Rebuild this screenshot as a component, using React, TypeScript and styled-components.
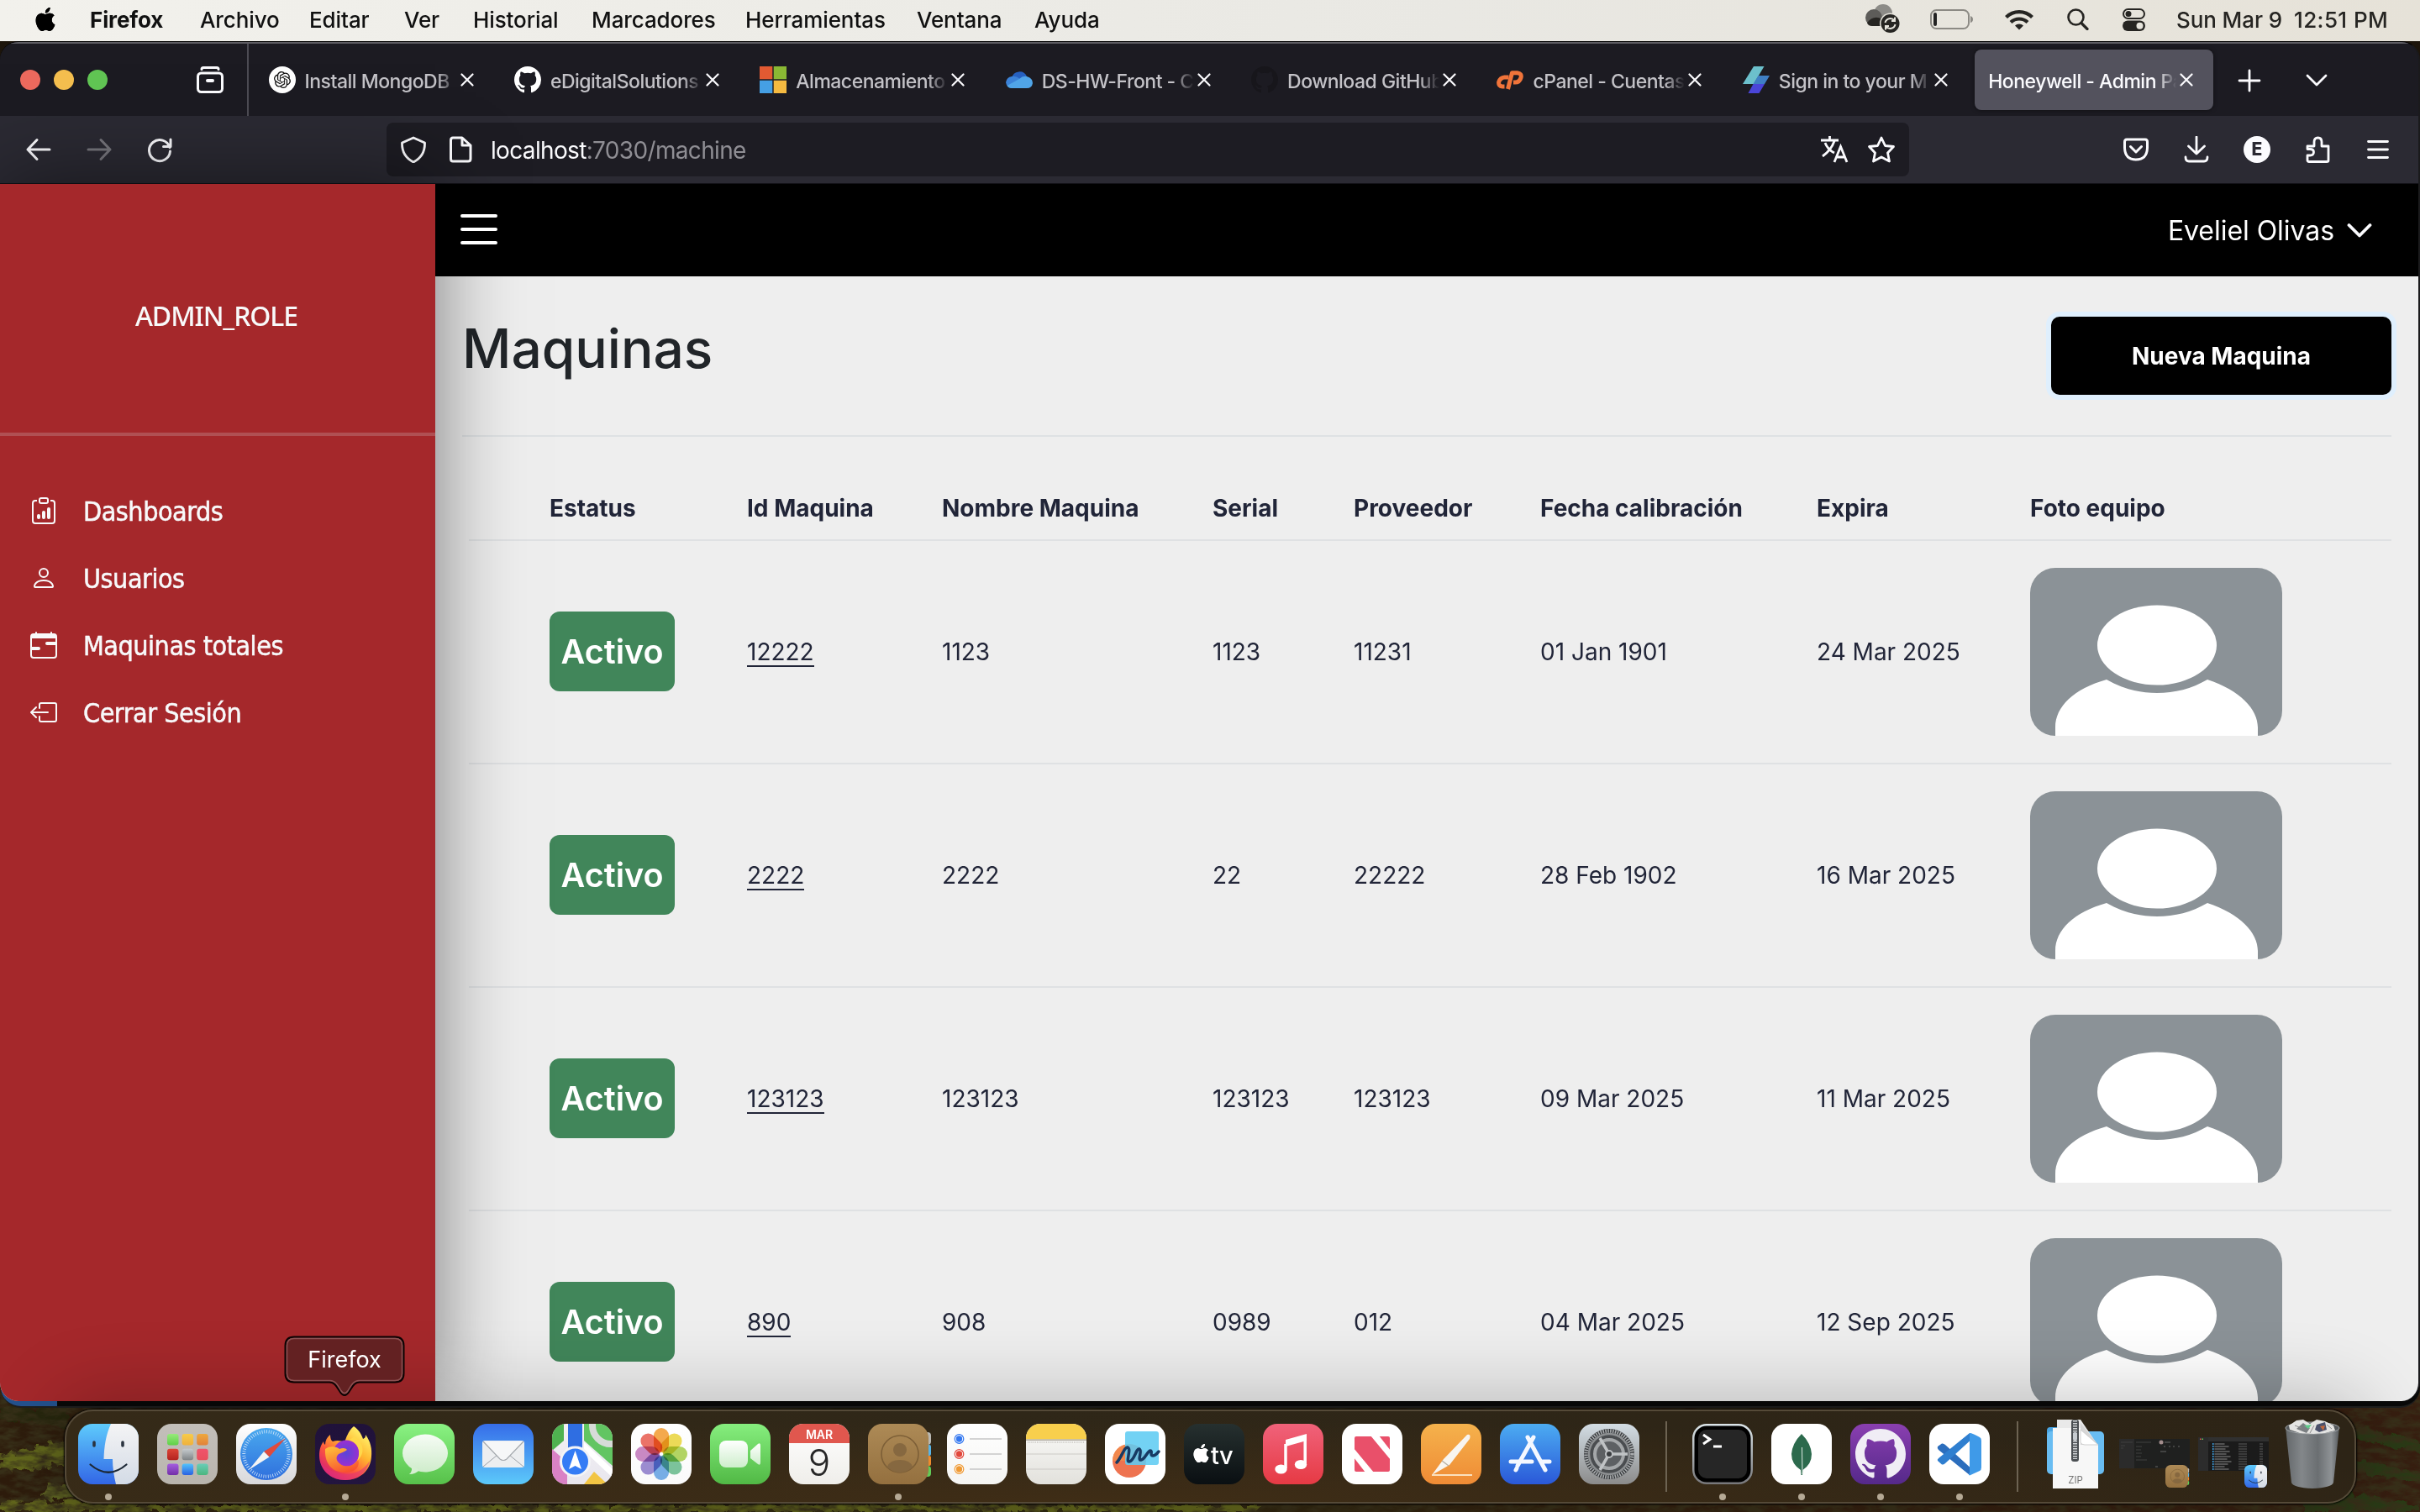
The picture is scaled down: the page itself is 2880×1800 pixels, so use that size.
import React from 'react';
import styled, { createGlobalStyle, css } from 'styled-components';
import { BsApple, BsGithub, BsClipboardData, BsPerson, BsCalendarRange, BsBoxArrowLeft, BsList } from 'react-icons/bs';
import { SiOpenai } from 'react-icons/si';

const Global = createGlobalStyle`
  * { box-sizing: border-box; }
  body { margin: 0; background: #1d150b; font-family: Inter, "Liberation Sans", sans-serif; }
  svg { display: block; flex: none; }
`;

/* ---------- desktop ---------- */

const Desktop = styled.div`
  position: relative;
  width: 2880px;
  height: 1800px;
  overflow: hidden;
  display: flex;
  flex-direction: column;
`;

const Wallpaper = styled.svg`
  position: absolute;
  left: 0;
  bottom: 0;
`;

const MenuBar = styled.header`
  position: relative;
  height: 49px;
  flex: none;
  display: flex;
  align-items: center;
  justify-content: space-between;
  padding: 0 38px 0 40px;
  background: linear-gradient(90deg, #f2f1ec, #e9e8e3 60%, #e6e2d8);
  color: #111;
  font-size: 26px;
`;

const MenuLeft = styled.nav`
  display: flex;
  align-items: center;
  white-space: nowrap;
  margin-top: -3px;
`;

const MenuItem = styled.span<{ $w: number; $bold?: boolean }>`
  width: ${p => p.$w}px;
  font-weight: ${p => (p.$bold ? 700 : 500)};
  letter-spacing: -0.1px;
`;

const AppleMark = styled.span`
  width: 67px;
  font-size: 28px;
  color: #000;
`;

const MenuRight = styled.div`
  display: flex;
  align-items: center;
  color: #262522;
  margin-top: -3px;
`;

const Status = styled.span<{ $mr: number }>`
  margin-right: ${p => p.$mr}px;
`;

const Clock = styled.span<{ $w: number; $ls?: number }>`
  width: ${p => p.$w}px;
  font-weight: 500;
  white-space: nowrap;
  letter-spacing: ${p => p.$ls ?? 0}px;
`;

/* ---------- browser window ---------- */

const BackWindow = styled.div`
  position: absolute;
  left: 1px;
  top: 1500px;
  width: 2879px;
  height: 176px;
  border-radius: 0 0 24px 24px;
  border-bottom: 2px solid #1f1f1f;
  background: linear-gradient(90deg, #24528f 67px, #090909 67px);
`;

const Window = styled.section`
  position: relative;
  width: 2880px;
  height: 1619px;
  flex: none;
  display: flex;
  flex-direction: column;
  overflow: hidden;
  border-radius: 22px;
  border-top: 1px solid #000;
  border-right: 2px solid #1a1a1c;
  background: #1c1b22;
`;

const TabStrip = styled.div`
  height: 88px;
  flex: none;
  display: flex;
  align-items: center;
  border-top: 2px solid #5e5d63;
  background: #1c1b22;
`;

const Lights = styled.div`
  display: flex;
  gap: 16px;
  padding-left: 24px;
  width: 234px;
`;

const Light = styled.i<{ $c: string }>`
  width: 24px;
  height: 24px;
  border-radius: 50%;
  background: ${p => p.$c};
`;

const StripDivider = styled.i`
  width: 1.5px;
  align-self: stretch;
  margin: 0 8px 0 28px;
  background: #4d4c54;
`;

const Tab = styled.div<{ $active?: boolean }>`
  width: 284px;
  height: 72px;
  margin-right: 8.4px;
  padding: 0 16px;
  flex: none;
  display: flex;
  align-items: center;
  border-radius: 8px;
  color: ${p => (p.$active ? '#fbfbfe' : '#c3c2c7')};
  ${p => p.$active && css`
    background: #53525d;
    box-shadow: 0 0 5px rgba(0, 0, 0, 0.5);
  `}
`;

const TabIcon = styled.span<{ $c?: string }>`
  width: 32px;
  height: 32px;
  margin-right: 11px;
  flex: none;
  display: flex;
  align-items: center;
  justify-content: center;
  font-size: 32px;
  color: ${p => p.$c ?? '#fff'};
`;

const TabTitle = styled.span<{ $active?: boolean }>`
  flex: 1;
  min-width: 0;
  white-space: nowrap;
  font-size: 23px;
  font-weight: 450;
  line-height: 32px;
  padding-top: 3px;
  letter-spacing: -0.5px;
  mask-image: linear-gradient(90deg, #000 calc(100% - 24px), transparent 100%);
`;

const TabClose = styled.span`
  width: 16px;
  margin: 0 8px 0 4px;
`;

const Toolbar = styled.div`
  height: 81px;
  flex: none;
  display: flex;
  align-items: center;
  background: #2b2a33;
  border-bottom: 1px solid #131218;
`;

const NavButtons = styled.div`
  width: 460px;
  padding-left: 30px;
  display: flex;
  gap: 40px;
`;

const UrlBar = styled.div`
  width: 1812px;
  height: 64px;
  border-radius: 8px;
  background: #1d1c23;
  display: flex;
  align-items: center;
  padding: 0 16px;
`;

const Url = styled.span`
  flex: 1;
  margin-left: 20px;
  padding-top: 2px;
  font-size: 28px;
  letter-spacing: -0.66px;
  color: #8f8e94;
  b { font-weight: 400; color: #fbfbfe; }
`;

const ToolIcons = styled.div`
  margin-left: 254px;
  display: flex;
  gap: 40px;
`;

const Account = styled.span`
  width: 32px;
  height: 32px;
  border-radius: 50%;
  background: #fbfbfe;
  color: #2b2a33;
  font-weight: 800;
  font-size: 21px;
  line-height: 32px;
  text-align: center;
`;

/* ---------- admin page ---------- */

const Page = styled.div`
  flex: 1;
  min-height: 0;
  display: flex;
  background: #eee;
`;

const Sidebar = styled.aside`
  position: relative;
  width: 518px;
  flex: none;
  background: #a5282b;
  box-shadow: 0 0 96px rgba(0, 0, 0, 0.5);
  color: #f8f9fa;
  font-size: 32px;
`;

const Role = styled.div`
  height: 300px;
  border-bottom: 4px solid #b05053;
  padding: 17px 3px 0 0;
  display: flex;
  align-items: center;
  justify-content: center;
  font-family: "Noto Sans", sans-serif;
  font-weight: 500;
  letter-spacing: -1.1px;
`;

const SideNav = styled.nav`
  padding-top: 49px;
`;

const SideLink = styled.a`
  height: 80px;
  padding-left: 36px;
  display: flex;
  align-items: center;
  gap: 31px;
`;

const SideLabel = styled.span`
  padding-top: 2px;
  font-family: "DejaVu Sans Condensed", "DejaVu Sans", sans-serif;
  font-stretch: condensed;
  letter-spacing: -0.48px;
  -webkit-text-stroke: 0.5px #f8f9fa;
`;

const Main = styled.main`
  flex: 1;
  min-width: 0;
  display: flex;
  flex-direction: column;
`;

const Navbar = styled.div`
  position: relative;
  z-index: 1;
  height: 110px;
  flex: none;
  display: flex;
  align-items: center;
  justify-content: space-between;
  padding: 0 55px 2px 20px;
  background: #000;
  color: #fff;
  font-size: 64px;
`;

const User = styled.div`
  display: flex;
  align-items: center;
  gap: 15px;
  padding-top: 2px;
  font-size: 32px;
  letter-spacing: -0.05px;
`;

const Content = styled.div`
  padding: 0 32px;
`;

const TitleRow = styled.div`
  height: 191px;
  padding-bottom: 1px;
  border-bottom: 2px solid #dee1e4;
  display: flex;
  align-items: center;
  justify-content: space-between;
`;

const Title = styled.h1`
  margin: 0;
  padding-bottom: 17px;
  font-size: 64px;
  font-weight: 500;
  color: #212529;
`;

const NewButton = styled.button`
  width: 405px;
  height: 93px;
  padding: 2px 0 0;
  border: 0;
  border-radius: 10px;
  background: #000;
  box-shadow: 0 0 0 6px #dfeffd;
  color: #fff;
  font: 700 28px Inter, sans-serif;
`;

const Table = styled.div`
  margin-left: 8px;
  color: #212538;
  font-size: 28px;
`;

const Row = styled.div<{ $head?: boolean }>`
  height: ${p => (p.$head ? 124 : 266)}px;
  padding: ${p => (p.$head ? '48px 0 0 96px' : '0 0 0 96px')};
  border-bottom: 2px solid #dfe1e3;
  display: grid;
  grid-template-columns: 235px 232px 322px 168px 222px 329px 254px 1fr;
  align-items: center;
  font-weight: ${p => (p.$head ? 700 : 400)};
  white-space: nowrap;
`;

const Badge = styled.span`
  width: 149px;
  height: 95px;
  margin-top: -1px;
  border-radius: 12px;
  background: #41865a;
  color: #fff;
  font-size: 39.5px;
  font-weight: 600;
  display: flex;
  align-items: center;
  justify-content: center;
`;

const IdLink = styled.a`
  justify-self: start;
  border-bottom: 2px solid #212538;
  line-height: 32px;
  margin-top: 2px;
`;

/* ---------- dock ---------- */

const Dock = styled.footer`
  position: absolute;
  left: 77px;
  top: 1678px;
  width: 2727px;
  height: 112px;
  padding-left: 3px;
  display: flex;
  border: 2px solid #554a38;
  border-radius: 34px;
  background: radial-gradient(ellipse 60% 90% at 45% 100%, #3f2d16, transparent), linear-gradient(90deg, #352a18, #2f2718 40%, #2d2416);
  box-shadow: 0 -4px 90px 10px rgba(0, 0, 0, 0.24), 0 0 2px 1px #000;
`;

const Slot = styled.div`
  width: 94px;
  flex: none;
  padding-top: 15px;
  display: flex;
  flex-direction: column;
  align-items: center;
`;

const Dot = styled.i`
  width: 8px;
  height: 8px;
  margin-top: 11px;
  border-radius: 50%;
  background: #b5a995;
`;

const DockSep = styled.i<{ $w: number }>`
  width: ${p => p.$w}px;
  flex: none;
  padding: 12px ${p => (p.$w - 2) / 2}px;
  &::before { content: ''; display: block; width: 2px; height: 84px; background: #6d6352; }
`;

const Tooltip = styled.div`
  position: absolute;
  left: 338px;
  top: 1590px;
  width: 144px;
  height: 74px;
  font-size: 27px;
  line-height: 57px;
  color: #fff;
  text-align: center;
  svg { position: absolute; inset: 0; }
  span { position: relative; }
`;

/* ---------- small drawings ---------- */

const Stroke = ({ d, size = 32, w = 3, box = 32, color = '#fbfbfe' }: { d: string; size?: number; w?: number; box?: number; color?: string }) => (
  <svg width={size} height={size} viewBox={`0 0 ${box} ${box}`} fill="none" stroke={color} strokeWidth={w} strokeLinecap="round" strokeLinejoin="round">
    <path d={d} />
  </svg>
);

const CloseMark = () => <Stroke size={16} box={16} w={2.2} d="M1.5 1.5L14.5 14.5M14.5 1.5L1.5 14.5" />;

const Photo = () => (
  <svg width="300" height="200" viewBox="0 0 300 200">
    <rect width="300" height="200" rx="30" fill="#8b9297" />
    <path d="M30 200V190C30 165 52 144 91 133C110 144 130 149 151 149C172 149 192 144 211 133C250 146 271 168 271 190V200Z" fill="#fff" />
    <ellipse cx="151" cy="92" rx="71" ry="47.5" fill="#fff" />
  </svg>
);

const Grad = ({ id, a, b }: { id: string; a: string; b: string }) => (
  <linearGradient id={id} x1="0" y1="0" x2="0" y2="1">
    <stop offset="0" stopColor={a} />
    <stop offset="1" stopColor={b} />
  </linearGradient>
);

const Tile = ({ id, a, b, size = 72, children }: { id: string; a: string; b: string; size?: number; children?: React.ReactNode }) => (
  <svg width={size} height={size} viewBox="0 0 72 72" overflow="visible">
    <defs>
      <Grad id={id} a={a} b={b} />
      <clipPath id={`${id}c`}><rect width="72" height="72" rx="17" /></clipPath>
    </defs>
    <rect width="72" height="72" rx="17" fill={`url(#${id})`} />
    <g clipPath={`url(#${id}c)`}>{children}</g>
  </svg>
);

const Finder = ({ id = 'fin', size }: { id?: string; size?: number }) => (
  <Tile id={id} a="#5ecbfc" b="#3266e6" size={size}>
    <defs><Grad id={`${id}w`} a="#f4f4f5" b="#d3dbe6" /></defs>
    <path d="M39 0C33 13 31 27 30.500 42H41C41 52 42.500 62 45 72H72V0Z" fill={`url(#${id}w)`} />
    <path d="M19 22V26M53 22V26" stroke="#2b3440" strokeWidth="3.600" strokeLinecap="round" />
    <path d="M14.500 48.500Q36 67 57.500 48.500" fill="none" stroke="#1c2836" strokeWidth="2.200" strokeLinecap="round" />
  </Tile>
);

const launchColors: [string, string][] = [
  ['#97ea7b', '#5fd048'], ['#f6cb4a', '#f0b13c'], ['#eea83c', '#e2823a'], ['#dd4537', '#b3231f'], ['#c6cbce', '#7f8487'],
  ['#f0546c', '#e8505d'], ['#a55ee0', '#7330a8'], ['#53c4fa', '#2a62e2'], ['#69cdb8', '#4cb67f'],
];

const Launchpad = () => (
  <Tile id="lau" a="#c3bfba" b="#b9b5ae">
    <defs>{launchColors.map(([a, b], i) => <Grad key={a} id={`lp${i}`} a={a} b={b} />)}</defs>
    {launchColors.map((c, i) => <rect key={c[0]} x={12 + (i % 3) * 17.6} y={12 + Math.floor(i / 3) * 17.7} width="13.500" height="13.500" rx="3" fill={`url(#lp${i})`} />)}
  </Tile>
);

const Safari = () => (
  <Tile id="saf" a="#ffffff" b="#d8d8da">
    <defs><Grad id="safb" a="#49a9ee" b="#2f6fdd" /></defs>
    <circle cx="36" cy="36" r="31" fill="url(#safb)" />
    <circle cx="36" cy="36" r="26.700" fill="none" stroke="#d6e8fa" strokeWidth="4" strokeDasharray=".8 1.980" />
    <path d="M59 17L39.500 39.500L33 33Z" fill="#e04a3c" />
    <path d="M15 55L33 33L39.500 39.500Z" fill="#f4f4f4" />
  </Tile>
);

const Firefox = () => (
  <Tile id="ffx" a="#20123a" b="#23153f">
    <defs>
      <linearGradient id="ffa" x1=".85" y1=".1" x2=".2" y2=".95">
        <stop offset="0" stopColor="#fff36b" /><stop offset=".35" stopColor="#ffb52f" /><stop offset=".65" stopColor="#ff5a3c" /><stop offset="1" stopColor="#d61c74" />
      </linearGradient>
      <linearGradient id="ffb" x1=".2" y1="0" x2=".6" y2="1">
        <stop offset="0" stopColor="#ffbd3a" /><stop offset="1" stopColor="#f8512f" />
      </linearGradient>
      <radialGradient id="ffg"><stop offset="0" stopColor="#5a45d8" /><stop offset="1" stopColor="#9a2fd0" /></radialGradient>
    </defs>
    <path d="M46 3C52 7 55 12 57 18C60 17 60 15 60 13C66 21 68 30 67 39C66 56 53 67 36 67C18 67 5 54 5 38C5 30 7 25 10 21C10 23 11 24 12 25C12 20 14 16 18 13C18 17 19 20 21 21C26 19 31 20 35 22C37 17 39 9 46 3Z" fill="url(#ffa)" />
    <path d="M6 44C12 54 24 60 38 60C52 59 60 52 65 44C62 58 51 67 36 67C20 67 9 58 6 44Z" fill="#e0337a" opacity=".55" />
    <circle cx="37" cy="35" r="15.500" fill="url(#ffg)" />
    <path d="M12 30C18 26 25 27 29 30C33 28 37 29 38 31C36 33 32 34 28 36C23 40 26 47 34 50C41 52 48 49 51 42C54 50 49 57 38 58C23 59 11 50 12 30Z" fill="url(#ffb)" />
    <path d="M41 19C48 21 53 28 52 36C52 40 51 42 50 44C60 36 58 22 47 15Z" fill="#ffd84a" />
  </Tile>
);

const Messages = () => (
  <Tile id="msg" a="#8af283" b="#57c14a">
    <defs><Grad id="msgb" a="#f6fcf5" b="#cfeccb" /></defs>
    <ellipse cx="37" cy="35" rx="27" ry="22.500" fill="url(#msgb)" />
    <path d="M20 49Q23 56 18 60Q26 60 30 55Z" fill="#d6efd2" />
  </Tile>
);

const Mail = () => (
  <Tile id="mai" a="#366de9" b="#5cc9fa">
    <rect x="11" y="20" width="50" height="32" rx="3" fill="#eceef0" />
    <path d="M12 51L29 37M60 51L43 37" stroke="#9da2a8" strokeWidth="1" />
    <path d="M12 21L32 42Q36 45 40 42L60 21" fill="#f6f7f8" stroke="#a5a9ae" strokeWidth="1.200" />
  </Tile>
);

const Maps = () => (
  <Tile id="map" a="#f3f1f4" b="#e8e6ee">
    <path d="M0 0H14V20L0 32Z" fill="#4fb250" /><path d="M38 0H72V50L38 20Z" fill="#62c562" />
    <circle cx="70" cy="2" r="22" fill="none" stroke="#d7dbd8" strokeWidth="8" />
    <path d="M0 30L18 46V72H0Z" fill="#d982c5" /><path d="M38 72L50 57L66 72Z" fill="#f2c544" /><path d="M38 22L72 54V64L38 32Z" fill="#fff" />
    <path d="M19 0H36V40H19Z" fill="#2f6ee2" />
    <circle cx="27.500" cy="45" r="17" fill="#347cf5" stroke="#f3f4f6" strokeWidth="3" />
    <path d="M27.500 32L35 54L27.500 50L20 54Z" fill="#fff" />
  </Tile>
);

const petals = ['#f29a2e', '#e9d43a', '#a5cd48', '#65b98a', '#5f9fe0', '#8a78c8', '#c074b8', '#e85a4e'];

const PetalGroup = styled.g`
  mix-blend-mode: multiply;
`;

const Photos = () => (
  <Tile id="pho" a="#ffffff" b="#fafafa">
    {petals.map((c, i) => (
      <PetalGroup key={c}><rect x="27" y="5" width="18" height="29" rx="9" fill={c} opacity=".85" transform={`rotate(${i * 45} 36 36)`} /></PetalGroup>
    ))}
  </Tile>
);

const FaceTime = () => (
  <Tile id="fac" a="#86ee7e" b="#51b945">
    <defs><Grad id="facw" a="#ffffff" b="#cdeecb" /></defs>
    <rect x="11" y="20" width="34" height="32" rx="8" fill="url(#facw)" />
    <path d="M48 32L57 24Q60 22 60 26V46Q60 50 57 48L48 41Z" fill="url(#facw)" />
  </Tile>
);

const Calendar = () => (
  <Tile id="cal" a="#ffffff" b="#efeeea">
    <rect width="72" height="23" fill="#e0574e" />
    <text x="36" y="17.500" textAnchor="middle" fontFamily="Inter" fontSize="14" fontWeight="600" fill="#fff">MAR</text>
    <text x="36" y="62" textAnchor="middle" fontFamily="Inter" fontSize="44" fontWeight="300" fill="#262626">9</text>
  </Tile>
);

const Contacts = ({ id = 'con', size }: { id?: string; size?: number }) => (
  <svg width={size ?? 72} height={size ?? 72} viewBox="0 0 72 72" overflow="visible">
    <defs><Grad id={id} a="#ad8a56" b="#94703f" /></defs>
    <rect x="60" y="10" width="15" height="15" rx="4" fill="#b9b8b3" /><rect x="60" y="25" width="15" height="13" rx="2" fill="#58b4e6" />
    <rect x="60" y="38" width="15" height="12" rx="2" fill="#ef8a2c" /><rect x="60" y="50" width="15" height="13" rx="4" fill="#62cc56" />
    <rect width="72" height="72" rx="17" fill={`url(#${id})`} />
    <circle cx="38" cy="36" r="22" fill="none" stroke="#7d5f37" strokeWidth="1.600" />
    <circle cx="38" cy="31" r="8" fill="#866840" />
    <path d="M23 51Q26 43 38 43Q50 43 53 51Q47 58 38 58Q29 58 23 51Z" fill="#866840" />
  </svg>
);

const Reminders = () => (
  <Tile id="rem" a="#ffffff" b="#f5f5f3">
    {['#3478f0', '#e1483c', '#ef9a35'].map((c, i) => (
      <g key={c}>
        <circle cx="14.500" cy={18 + i * 18} r="5.300" fill="#fff" stroke={c} strokeWidth="1.200" /><circle cx="14.500" cy={18 + i * 18} r="3.700" fill={c} />
        <rect x="27" y={17.4 + i * 18} width="38" height="1.200" fill="#b9b9b9" />
      </g>
    ))}
  </Tile>
);

const Notes = () => (
  <Tile id="not" a="#fbfbf9" b="#e2e1dc">
    <rect width="72" height="18.500" fill="#f8cf4c" /><rect y="18.500" width="72" height="1.500" fill="#b0aca2" />
    <path d="M2 22H70" stroke="#c3c0ba" strokeWidth="1.500" strokeDasharray="1 1.200" /><path d="M0 36H72M0 54H72" stroke="#cbc9c5" />
  </Tile>
);

const Freeform = () => (
  <Tile id="fre" a="#ffffff" b="#ffffff">
    <circle cx="29" cy="44" r="20" fill="#ee7350" /><path d="M9 44A20 20 0 0 1 29 24V44Z" fill="#f3964b" opacity=".6" />
    <rect x="24" y="9" width="40" height="40" rx="3" fill="#60ccf3" opacity=".88" />
    <path d="M14 46C20 40 23 27 27 28C32 30 24 46 29 45C35 44 37 29 41 30C45 32 38 44 43 43C48 42 50 33 54 32C57 32 53 38 57 38C60 38 62 35 64 33" fill="none" stroke="#173a63" strokeWidth="3.500" strokeLinecap="round" />
  </Tile>
);

const TV = () => (
  <Tile id="atv" a="#26302f" b="#0a0f12">
    <svg x="9.500" y="22" width="22" height="26" viewBox="0 0 16 16"><BsApple size={16} color="#fff" /></svg>
    <text x="32" y="47.500" fontFamily="Inter" fontSize="29" fontWeight="500" fill="#fff" letterSpacing="-.5">tv</text>
  </Tile>
);

const Music = () => (
  <Tile id="mus" a="#f0627a" b="#e63a44">
    <path d="M27 52V19L52 12V20L27 27Z" fill="#fff" /><path d="M50.200 14V47" stroke="#fff" strokeWidth="3.500" />
    <path d="M27 24V53" stroke="#fff" strokeWidth="3.500" /><ellipse cx="21.500" cy="54" rx="7.200" ry="5.500" fill="#fff" /><ellipse cx="45" cy="48.500" rx="7.200" ry="5.500" fill="#fff" />
  </Tile>
);

const News = () => (
  <Tile id="new" a="#ffffff" b="#ffffff">
    <rect x="15" y="15" width="42" height="42" rx="2" fill="#e9506a" />
    <path d="M34 14H44L58 32V43Z" fill="#fff" /><path d="M14 29V40L28 58H38Z" fill="#fff" />
  </Tile>
);

const Pages = () => (
  <Tile id="pag" a="#f5b24c" b="#ef8b35">
    <path d="M55 13Q60 12 58 18L34 49L13 61L27 42Z" fill="#f8f5f0" /><path d="M25 44L33 50" stroke="#b9b1a5" strokeWidth="1.500" />
    <path d="M13 61H61" stroke="#fbe0bd" strokeWidth="2" />
  </Tile>
);

const AppStore = () => (
  <Tile id="aps" a="#4cacf2" b="#2a58d8">
    <g stroke="#f4f8ff" strokeWidth="5" strokeLinecap="round"><path d="M40 16L21 50M33 16L54 55M13 45H38M50 45H59M19 55L20 53" /></g>
  </Tile>
);

const Settings = () => (
  <Tile id="set" a="#d3dde4" b="#8b8b8b">
    <circle cx="36" cy="36" r="30" fill="#333639" /><circle cx="36" cy="36" r="27.500" fill="none" stroke="#a9acae" strokeWidth="4.500" strokeDasharray="1.600 1.300" />
    <circle cx="36" cy="36" r="24" fill="#4a4d50" stroke="#8d9092" strokeWidth="2.500" /><circle cx="36" cy="36" r="17" fill="#5d6063" stroke="#a4a7a9" strokeWidth="4" />
    <path d="M36 36L58 36M36 36L25 17M36 36L25 55" stroke="#c0c3c5" strokeWidth="3.500" /><circle cx="36" cy="36" r="4" fill="#3a3d40" stroke="#c0c3c5" strokeWidth="2" />
  </Tile>
);

const Terminal = () => (
  <Tile id="ter" a="#dce6ea" b="#77777a">
    <rect x="2.500" y="2.500" width="67" height="67" rx="14.500" fill="#000" />
    <rect x="7" y="7" width="58" height="58" rx="10" fill="#262626" />
    <path d="M13 13L21 18.500L13 24" fill="none" stroke="#fff" strokeWidth="3" /><path d="M25 27H35" stroke="#fff" strokeWidth="2.800" />
  </Tile>
);

const Mongo = () => (
  <Tile id="mon" a="#ffffff" b="#ffffff">
    <path d="M36 12Q25 23 24 36Q24 48 35 55L35.500 61H37L37.500 55Q48 48 48 36Q47 23 36 12Z" fill="#2c6a4d" />
    <path d="M36.500 28L37 60" stroke="#dfeae4" strokeWidth="1" />
  </Tile>
);

const GithubDesktop = () => (
  <Tile id="ghd" a="#8a3fb0" b="#55298a">
    <svg x="6" y="6" width="60" height="60" viewBox="0 0 16 16"><BsGithub size={16} color="#f0edf5" /></svg>
  </Tile>
);

const VSCode = () => (
  <Tile id="vsc" a="#ffffff" b="#ffffff">
    <path d="M10 27L15 23.500Q17 23 19 25L53 56L48 61L11 31Q9 29 10 27Z" fill="#2c6ebd" />
    <path d="M10 44L15 48.500Q17 49 19 47L53 16L48 11L11 41Q9 43 10 44Z" fill="#2f7fd0" />
    <path d="M48 11Q50 10.500 60 16Q62 17 62 20V52Q62 55 60 56L48 61.500Q46 61 48 58Z" fill="#3f9ae8" />
  </Tile>
);

/* Document and bin pictures rise a little above the row of app tiles. */
const Tall = styled.div<{ $mt: number }>`
  margin-top: ${p => p.$mt}px;
`;

const Zip = () => (
  <Tall $mt={-6}>
    <svg width="70" height="86" viewBox="0 0 70 86">
      <rect x="1" y="10" width="30" height="20" rx="4" fill="#4aa5e2" /><rect x="1" y="15" width="68" height="51" rx="5" fill="#69bdf2" />
      <path d="M13 1H41L62 32V80H13Z" fill="#e9e9e9" /><path d="M8 11H41L62 31V83H8Z" fill="#f7f7f7" />
      <path d="M41 5V31H62Z" fill="#d6d6d6" /><path d="M41 13V28Q42 31 46 31H62Z" fill="#fff" stroke="#cfcfcf" />
      <rect x="30" y="1" width="9" height="50" rx="3" fill="#4b4f53" /><path d="M34.500 2V48" stroke="#d2d5d8" strokeWidth="5" strokeDasharray="1.500 1.500" />
      <rect x="32" y="16" width="5" height="10" rx="2" fill="#c7ccd1" />
      <text x="35" y="77" textAnchor="middle" fontFamily="Inter" fontSize="11.500" fill="#777">ZIP</text>
    </svg>
  </Tall>
);

const MiniContacts = () => (
  <Tall $mt={16}>
    <svg width="84" height="62" viewBox="0 0 84 62" overflow="visible">
      <rect y="2" width="84" height="35" fill="#1f201f" /><rect y="2" width="18" height="35" fill="#2b2b2b" />
      <path d="M2 6H16M2 10H7M2 13H5M20 6H38M20 11H27M20 15H26M20 19H27M20 23H26M20 27H33" stroke="#414141" strokeWidth="1" />
      <circle cx="50" cy="6" r="2.500" fill="#a38d8d" /><path d="M54 6H61M53 11H55M59 11H61M64 11H66M70 11H72M49 17H56M43 35H46" stroke="#666" strokeWidth="1" />
      <svg x="55" y="33" width="28" height="28" overflow="visible"><Contacts id="con2" size={27} /></svg>
    </svg>
  </Tall>
);

const MiniFinder = () => (
  <Tall $mt={16}>
    <svg width="84" height="62" viewBox="0 0 84 62" overflow="visible">
      <rect width="84" height="40" fill="#1b1b1b" /><rect width="84" height="5" fill="#303030" /><rect width="12" height="40" fill="#2c2c2c" />
      <rect x="2" y="1.500" width="1.500" height="1.500" fill="#e55" /><rect x="4.500" y="1.500" width="1.500" height="1.500" fill="#6c5" />
      {Array.from({ length: 11 }, (_, i) => (
        <g key={i}>
          <rect x="17" y={7 + i * 3} width="1.500" height="2" fill="#3c9ee0" /><rect x="19.500" y={7.5 + i * 3} width={12 + (i * 5) % 9} height="1" fill="#8a8a8a" />
          <rect x="48" y={7.5 + i * 3} width="10" height="1" fill="#5c5c5c" /><rect x="73" y={7.5 + i * 3} width="4" height="1" fill="#5c5c5c" />
        </g>
      ))}
      <svg x="55" y="33" width="28" height="28"><Finder id="fin2" size={27} /></svg>
    </svg>
  </Tall>
);

const Trash = () => (
  <Tall $mt={-7}>
    <svg width="66" height="86" viewBox="0 0 66 86">
      <defs>
        <linearGradient id="tra"><stop offset="0" stopColor="#63676a" /><stop offset=".3" stopColor="#83878a" /><stop offset=".6" stopColor="#6b6f72" /><stop offset=".85" stopColor="#8f9396" /><stop offset="1" stopColor="#55595c" /></linearGradient>
      </defs>
      <path d="M1 11H65L58 77Q56 83 33 84Q10 83 8 77Z" fill="url(#tra)" />
      <ellipse cx="33" cy="12" rx="32" ry="7" fill="#55595c" stroke="#a3a7aa" strokeWidth="1" />
      <path d="M5 9L14 3L22 2L30 7L38 2L48 4L58 9L60 15L48 18L34 19L18 18L6 14Z" fill="#e4e4e2" />
      <path d="M14 13L22 6L30 12L26 18Z" fill="#7b7f82" /><path d="M23 9L32 8L28 13Z" fill="#5fc98a" /><path d="M38 8L48 5L50 14L41 17L36 14Z" fill="#4a506a" /><path d="M42 10L48 9L46 15Z" fill="#c2683c" />
      <path d="M30 18L35 9M12 9L20 12M50 8L56 13" stroke="#8c8c8c" />
    </svg>
  </Tall>
);

/* ---------- data ---------- */

const menus: [string, number][] = [
  ['Archivo', 130], ['Editar', 113], ['Ver', 82], ['Historial', 141], ['Marcadores', 183],
  ['Herramientas', 204], ['Ventana', 140], ['Ayuda', 90],
];

const tabs: { title: string; icon?: React.ReactNode; color?: string }[] = [
  { title: 'Install MongoDB', icon: <svg width="32" height="32" viewBox="0 0 32 32"><circle cx="16" cy="16" r="16" fill="#fff" /><svg x="6" y="6" width="20" height="20" color="#111"><SiOpenai size={20} /></svg></svg> },
  { title: 'eDigitalSolutions', icon: <BsGithub /> },
  { title: 'Almacenamiento', icon: <svg width="32" height="32" viewBox="0 0 32 32"><path d="M0 0H15.300V15.300H0Z" fill="#e25a32" /><path d="M16.700 0H32V15.300H16.700Z" fill="#8ab834" /><path d="M0 16.700H15.300V32H0Z" fill="#459fe4" /><path d="M16.700 16.700H32V32H16.700Z" fill="#f5ba41" /></svg> },
  { title: 'DS-HW-Front - C', icon: <svg width="32" height="32" viewBox="0 0 32 32"><path d="M7 14A9.500 9.500 0 0 1 25 12L16 20Z" fill="#2660c0" /><path d="M7 12Q12 11 17 15L8 26Q1 26 0 19Q1 13 7 12Z" fill="#3b82d8" /><path d="M25 12Q32 14 32 20Q31 26 25 26H7Q3 26 1.500 23L16 15Q20 11 25 12Z" fill="#50a5e8" /></svg> },
  { title: 'Download GitHub', icon: <BsGithub />, color: '#17161b' },
  { title: 'cPanel - Cuentas', icon: <svg width="32" height="32" viewBox="0 0 32 32" fill="none" stroke="#f0743a" strokeWidth="5" strokeLinejoin="round"><path d="M14.500 13H9.500Q4.500 13.500 2.700 18.500Q2 23.500 7 24H9.500" /><path d="M13.500 27L18.500 7.700H24.500Q30.500 8.500 29 13.500Q27.500 19 22 19H20" /></svg> },
  { title: 'Sign in to your M', icon: <svg width="32" height="32" viewBox="0 0 32 32"><path d="M13 0H25.500L13 21H0Z" fill="#6cc0cc" /><path d="M18.500 11H32L26 21H12.500Z" fill="#3f7fc4" /><path d="M12.500 21H26L19.500 32H6.500Z" fill="#4a45d8" /></svg> },
  { title: 'Honeywell - Admin Pa' },
];

const columns = ['Estatus', 'Id Maquina', 'Nombre Maquina', 'Serial', 'Proveedor', 'Fecha calibración', 'Expira', 'Foto equipo'];

const rows = [
  ['12222', '1123', '1123', '11231', '01 Jan 1901', '24 Mar 2025'],
  ['2222', '2222', '22', '22222', '28 Feb 1902', '16 Mar 2025'],
  ['123123', '123123', '123123', '123123', '09 Mar 2025', '11 Mar 2025'],
  ['890', '908', '0989', '012', '04 Mar 2025', '12 Sep 2025'],
];

const apps: [React.FC, boolean][] = [
  [Finder, true], [Launchpad, false], [Safari, false], [Firefox, true], [Messages, false], [Mail, false], [Maps, false],
  [Photos, false], [FaceTime, false], [Calendar, false], [Contacts, true], [Reminders, false], [Notes, false], [Freeform, false],
  [TV, false], [Music, false], [News, false], [Pages, false], [AppStore, false], [Settings, false],
];
const openApps: React.FC[] = [Terminal, Mongo, GithubDesktop, VSCode];

export default function App() {
  return (
    <>
      <Global />
      <Desktop>
        <Wallpaper width="2880" height="150" viewBox="0 0 2880 150">
          <defs>
            <linearGradient id="wall"><stop offset="0" stopColor="#2e1c0c" /><stop offset=".4" stopColor="#2f2b10" /><stop offset=".7" stopColor="#33200f" /><stop offset="1" stopColor="#371e10" /></linearGradient>
            <filter id="grain" x="0" y="0" width="100%" height="100%">
              <feTurbulence type="fractalNoise" baseFrequency=".05 .12" numOctaves="4" seed="7" />
              <feColorMatrix values="0 0 0 0 .04  0 0 0 0 .03  0 0 0 0 .01  2.600 0 0 0 -.9" />
            </filter>
            <filter id="rough" x="-5%" y="-20%" width="110%" height="140%">
              <feTurbulence type="fractalNoise" baseFrequency=".09" numOctaves="3" seed="3" />
              <feDisplacementMap in="SourceGraphic" scale="16" />
            </filter>
          </defs>
          <rect width="2880" height="150" fill="url(#wall)" />
          <g filter="url(#rough)">
            <path d="M0 26H80V50L0 40Z" fill="#262709" />
            <path d="M0 84L40 72L80 66V94L40 100L0 98Z" fill="#63691f" />
            <path d="M60 118L90 112V132L50 134Z" fill="#5d6420" />
            <path d="M0 138L90 136L160 141H900L1500 142V150H0Z" fill="#62661f" />
            <path d="M2790 44L2880 66V80L2790 60ZM2790 84L2880 104V116L2790 100ZM2740 138L2800 128L2880 142V150H2740Z" fill="#2a3a12" />
          </g>
          <rect width="2880" height="150" filter="url(#grain)" />
        </Wallpaper>

        <MenuBar>
          <MenuLeft>
            <AppleMark><BsApple /></AppleMark>
            <MenuItem $w={131} $bold>Firefox</MenuItem>
            {menus.map(([m, w]) => <MenuItem key={m} $w={w}>{m}</MenuItem>)}
          </MenuLeft>
          <MenuRight>
            <Status $mr={36}>
              <svg width="41" height="36" viewBox="0 0 41 36">
                <circle cx="21" cy="11" r="11" fill="#8c8b87" /><circle cx="10" cy="16" r="10" fill="#5d5c59" /><path d="M2 22Q10 12 20 18L18 26H8Q3 26 2 22Z" fill="#262522" />
                <circle cx="29.500" cy="23" r="12.500" fill="#e6e4dc" /><circle cx="29.500" cy="23" r="11" fill="#262522" />
                <path d="M23.500 22A6.200 6.200 0 0 1 34.500 19.500M35.500 24A6.200 6.200 0 0 1 24.500 26.500M35 15.500V20H31M24 30.500V26H28" fill="none" stroke="#e6e4dc" strokeWidth="2" />
              </svg>
            </Status>
            <Status $mr={38}>
              <svg width="51" height="24" viewBox="0 0 51 24"><rect x="1" y="1" width="45" height="22" rx="6.500" fill="none" stroke="#8c8a84" strokeWidth="2" /><rect x="4" y="4" width="4" height="16" rx="2" fill="#222" /><path d="M48 8Q51 9 51 12Q51 15 48 16Z" fill="#8c8a84" /></svg>
            </Status>
            <Status $mr={40}>
              <svg width="34" height="25" viewBox="0 0 34 25" fill="none" stroke="#262522" strokeWidth="4.200"><path d="M1.500 9.500A22 22 0 0 1 32.500 9.500" /><path d="M7 15.500A14.500 14.500 0 0 1 27 15.500" /><path d="M17 24.500L12 19.500A7 7 0 0 1 22 19.500Z" fill="#262522" stroke="none" /></svg>
            </Status>
            <Status $mr={40}><svg width="26" height="26" viewBox="0 0 26 26" fill="none" stroke="#262522" strokeWidth="2.600" strokeLinecap="round"><circle cx="10.500" cy="10.500" r="9" /><path d="M17 17.500L24 24.500" strokeWidth="3.200" /></svg></Status>
            <Status $mr={37}>
              <svg width="27" height="27" viewBox="0 0 27 27"><rect x="1" y="1" width="25" height="11" rx="5.500" fill="none" stroke="#262522" strokeWidth="2" /><circle cx="7" cy="6.500" r="3.500" fill="#262522" /><rect y="14.500" width="27" height="12.500" rx="6.200" fill="#262522" /><circle cx="20.500" cy="20.700" r="4" fill="#e6e4dc" /></svg>
            </Status>
            <Clock $w={140} $ls={-0.1}>Sun Mar 9</Clock>
            <Clock $w={112} $ls={0.4}>12:51 PM</Clock>
          </MenuRight>
        </MenuBar>

        <BackWindow />
        <Window>
          <TabStrip>
            <Lights><Light $c="#ed6a5e" /><Light $c="#f5bf4f" /><Light $c="#61c554" /></Lights>
            <svg width="32" height="32" viewBox="0 0 32 32" fill="none" stroke="#fbfbfe" strokeWidth="3" strokeLinecap="round"><path d="M6 3.500Q6 1.500 8 1.500H24Q26 1.500 26 3.500" /><rect x="1.500" y="8" width="29" height="22.500" rx="4" /><path d="M13 17H19" strokeWidth="4" /></svg>
            <StripDivider />
            {tabs.map(t => (
              <Tab key={t.title} $active={!t.icon}>
                {t.icon && <TabIcon $c={t.color}>{t.icon}</TabIcon>}
                <TabTitle>{t.title}</TabTitle>
                <TabClose><CloseMark /></TabClose>
              </Tab>
            ))}
            <Stroke size={70} box={70} w={2.8} d="M22 36H46M34 24V48" />
            <Stroke size={76} box={76} w={2.8} d="M33 33L44 44L55 33" />
          </TabStrip>

          <Toolbar>
            <NavButtons>
              <Stroke d="M3 16H29M14 4.500L3 16L14 27.500" />
              <Stroke d="M3 16H29M18 4.500L29 16L18 27.500" color="#77767d" />
              <Stroke d="M28 13.500A12.500 12.500 0 1 0 28.500 18M29 4V12.500H20.500" />
            </NavButtons>
            <UrlBar>
              <Stroke d="M16 2L29.500 8Q30 24 16 31Q2 24 2.500 8Z" w={2.8} />
              <svg width="56" height="32" viewBox="-24 0 56 32" fill="none" stroke="#fbfbfe" strokeWidth="3" strokeLinejoin="round"><path d="M7 2H18L28 11V27Q28 30 25 30H7Q4.500 30 4.500 27V5Q4.500 2 7 2Z" /><path d="M18 2V11H28" /></svg>
              <Url><b>localhost</b>:7030/machine</Url>
              <svg width="34" height="32" viewBox="0 0 34 32" fill="none" stroke="#fbfbfe" strokeWidth="2.800"><path d="M1 5H22M11.500 0V5M17 6Q13 17 3 24M6 8Q9 16 17 20" /><path d="M17 31L24.500 12.500L32 31M20 25H29" /></svg>
              <svg width="56" height="32" viewBox="-22 0 56 32" fill="none" stroke="#fbfbfe" strokeWidth="2.800" strokeLinejoin="round"><path d="M17 2L21.500 11.500L31.500 12.500L24.500 20L26.500 30L17 25L7.500 30L9.500 20L2.500 12.500L12.500 11.500Z" /></svg>
            </UrlBar>
            <ToolIcons>
              <Stroke d="M5 4H27Q29.500 4 29.500 7V14Q29 28 16 28Q3 28 2.500 14V7Q2.500 4 5 4ZM9.500 12.500L16 19L22.500 12.500" />
              <Stroke d="M16 1V20M6.500 12L16 21L25.500 12M3 25Q3 30 7 30H25Q29 30 29 25" w={2.8} />
              <Account>E</Account>
              <Stroke d="M4 12H12V7Q12 2 16.500 2Q21 2 21 7V12H29V29Q29 30.500 27 30.500H6Q4 30.500 4 28.500V23H7Q11.500 23 11.500 19Q11.500 15.500 7 15.500H4Z" w={2.8} />
              <Stroke d="M4.500 6.500H27.500M4.500 16H27.500M4.500 25.500H27.500" w={2.8} />
            </ToolIcons>
          </Toolbar>

          <Page>
            <Sidebar>
              <Role>ADMIN_ROLE</Role>
              <SideNav>
                <SideLink><BsClipboardData /><SideLabel>Dashboards</SideLabel></SideLink>
                <SideLink><BsPerson /><SideLabel>Usuarios</SideLabel></SideLink>
                <SideLink><BsCalendarRange /><SideLabel>Maquinas totales</SideLabel></SideLink>
                <SideLink><BsBoxArrowLeft /><SideLabel>Cerrar Sesión</SideLabel></SideLink>
              </SideNav>
            </Sidebar>
            <Main>
              <Navbar>
                <BsList />
                <User>Eveliel Olivas<Stroke size={30} box={30} w={3.8} d="M2.500 9L15 21.500L27.500 9" /></User>
              </Navbar>
              <Content>
                <TitleRow>
                  <Title>Maquinas</Title>
                  <NewButton>Nueva Maquina</NewButton>
                </TitleRow>
                <Table>
                  <Row $head>{columns.map(c => <span key={c}>{c}</span>)}</Row>
                  {rows.map(([id, ...cells]) => (
                    <Row key={id}>
                      <Badge>Activo</Badge>
                      <IdLink>{id}</IdLink>
                      {cells.map((c, i) => <span key={i}>{c}</span>)}
                      <Photo />
                    </Row>
                  ))}
                </Table>
              </Content>
            </Main>
          </Page>
        </Window>

        <Dock>
          {apps.map(([Icon, open], i) => <Slot key={i}><Icon />{open && <Dot />}</Slot>)}
          <DockSep $w={41} />
          {openApps.map((Icon, i) => <Slot key={i}><Icon /><Dot /></Slot>)}
          <DockSep $w={44} />
          <Slot><Zip /></Slot>
          <Slot><MiniContacts /></Slot>
          <Slot><MiniFinder /></Slot>
          <Slot><Trash /></Slot>
        </Dock>

        <Tooltip>
          <svg width="144" height="74" viewBox="0 0 144 74"><path d="M12 1.500H132Q142.500 1.500 142.500 12V45Q142.500 55.500 132 55.500H90C84 55.500 82 60 78 66Q72 76 66 66C62 60 60 55.500 54 55.500H12Q1.500 55.500 1.500 45V12Q1.500 1.500 12 1.500Z" fill="#632122" stroke="#0b0303" strokeWidth="2" /><path d="M12 3.500H132Q140.500 3.500 140.500 12V45Q140.500 53.500 132 53.500H89C83 53.500 80 59 76.500 65Q72 72 67.500 65C64 59 61 53.500 55 53.500H12Q3.500 53.500 3.500 45V12Q3.500 3.500 12 3.500Z" fill="none" stroke="#8d5253" strokeWidth="1.500" /></svg>
          <span>Firefox</span>
        </Tooltip>
      </Desktop>
    </>
  );
}
